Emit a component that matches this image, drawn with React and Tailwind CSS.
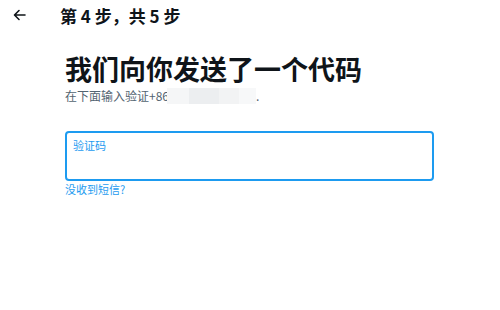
export default function App() {
  return (
    <div className="w-[500px] h-[310px] bg-white overflow-hidden font-['Noto_Sans_CJK_SC','Noto_Sans',sans-serif]">
      <div className="flex items-center h-[30px] pl-[13px]">
        <svg width="13" height="12" viewBox="0 0 13 12" className="text-[#0f1419]">
          <path d="M12 6H2M6 1.5L1.5 6L6 10.5" stroke="currentColor" strokeWidth="1.6" fill="none" strokeLinecap="round" strokeLinejoin="round" />
        </svg>
        <div className="ml-[34px] text-[17px] font-bold text-[#0f1419] leading-none">第 4 步，共 5 步</div>
      </div>
      <div className="px-[65px] pt-[21px]">
        <div className="text-[27px] font-bold text-[#0f1419] leading-[36px]">我们向你发送了一个代码</div>
        <div className="flex items-center text-[12px] text-[#536471] leading-[16px] mt-[1px]">
          <span>在下面输入验证+86</span>
          <span className="flex h-[16px] w-[89px] -ml-[2px]">
            <span className="w-[22px] bg-[#f5f6f7]"></span>
            <span className="w-[30px] bg-[#eceef0]"></span>
            <span className="w-[20px] bg-[#f2f3f4]"></span>
            <span className="w-[17px] bg-[#f7f8f9]"></span>
          </span>
          <span>.</span>
        </div>
        <div className="mt-[27px] h-[50px] w-[369px] border-2 border-[#1d9bf0] rounded-[4px] px-[6px] pt-[5px]">
          <div className="text-[11px] text-[#1d9bf0] leading-[14px]">验证码</div>
        </div>
        <div className="text-[11px] text-[#1d9bf0] leading-[14px] mt-[1px]">没收到短信?</div>
      </div>
    </div>
  );
}
